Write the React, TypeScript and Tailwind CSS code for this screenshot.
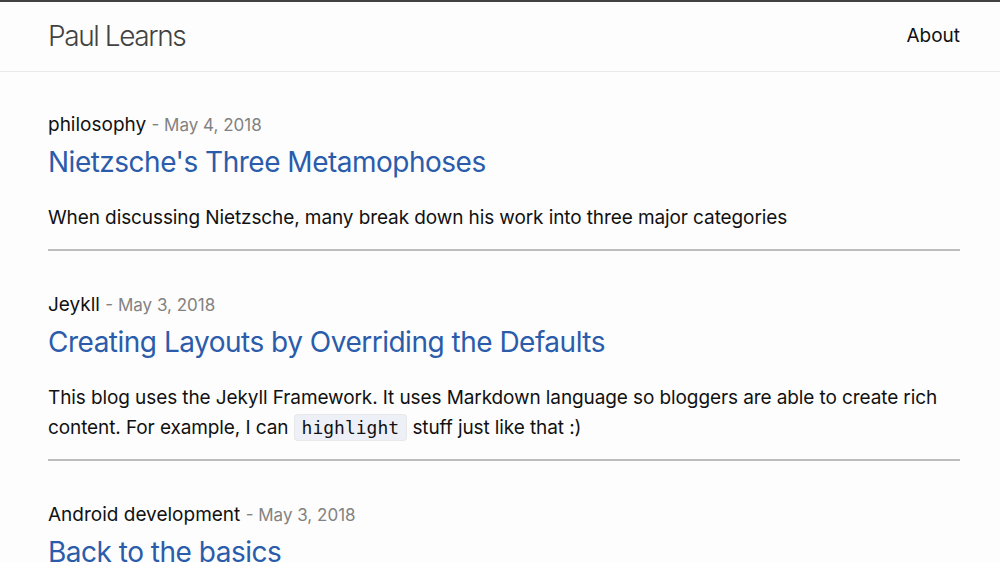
import React from 'react';

type Post = {
  category: string;
  date: string;
  title: string;
  excerpt?: React.ReactNode;
};

const posts: Post[] = [
  {
    category: 'philosophy',
    date: 'May 4, 2018',
    title: "Nietzsche's Three Metamophoses",
    excerpt: 'When discussing Nietzsche, many break down his work into three major categories',
  },
  {
    category: 'Jeykll',
    date: 'May 3, 2018',
    title: 'Creating Layouts by Overriding the Defaults',
    excerpt: (
      <>
        This blog uses the Jekyll Framework. It uses Markdown language so bloggers are able to create rich content. For
        example, I can{' '}
        <code className="font-['DejaVu_Sans_Mono',monospace] text-[18px] tracking-normal bg-[#eef0f8] border border-[#e8e8e8] rounded-[4px] px-[7px] py-[2px]">
          highlight
        </code>{' '}
        stuff just like that :)
      </>
    ),
  },
  {
    category: 'Android development',
    date: 'May 3, 2018',
    title: 'Back to the basics',
  },
];

const PostItem: React.FC<{ post: Post; last?: boolean }> = ({ post, last }) => {
  return (
    <li className={last ? 'pt-[40px]' : 'pt-[40px] first:pt-[39px] pb-[16px] border-b-2 border-[#bdbdbd]'}>
      <div className="text-[19px] leading-[28px] text-[#111]">
        {post.category} <span className="text-[17px] text-[#828282]">- {post.date}</span>
      </div>
      <h2 className="text-[28px] leading-[40px] tracking-[-0.5px] mt-[3px] text-[#2a5cab]">
        <a href="#">{post.title}</a>
      </h2>
      {post.excerpt && (
        <p className="text-[19px] leading-[30px] tracking-[-0.1px] text-[#111] mt-[21px]">{post.excerpt}</p>
      )}
    </li>
  );
};

export default function App() {
  return (
    <div className="bg-[#fdfdfd] font-['Inter',sans-serif] overflow-hidden h-[562px]">
      <header className="border-t-2 border-[#424242] border-b border-b-[#e8e8e8] h-[72px]">
        <div className="ml-[48px] mr-[40px] flex items-center justify-between h-[68px]">
          <a href="#" className="text-[28px] font-light tracking-[-1.4px] text-[#424242]">
            Paul Learns
          </a>
          <nav>
            <a href="#" className="text-[19px] text-[#111]">
              About
            </a>
          </nav>
        </div>
      </header>
      <main className="ml-[48px] mr-[40px]">
        <ul>
          {posts.map((p, i) => (
            <PostItem key={i} post={p} last={i === posts.length - 1} />
          ))}
        </ul>
      </main>
    </div>
  );
}
